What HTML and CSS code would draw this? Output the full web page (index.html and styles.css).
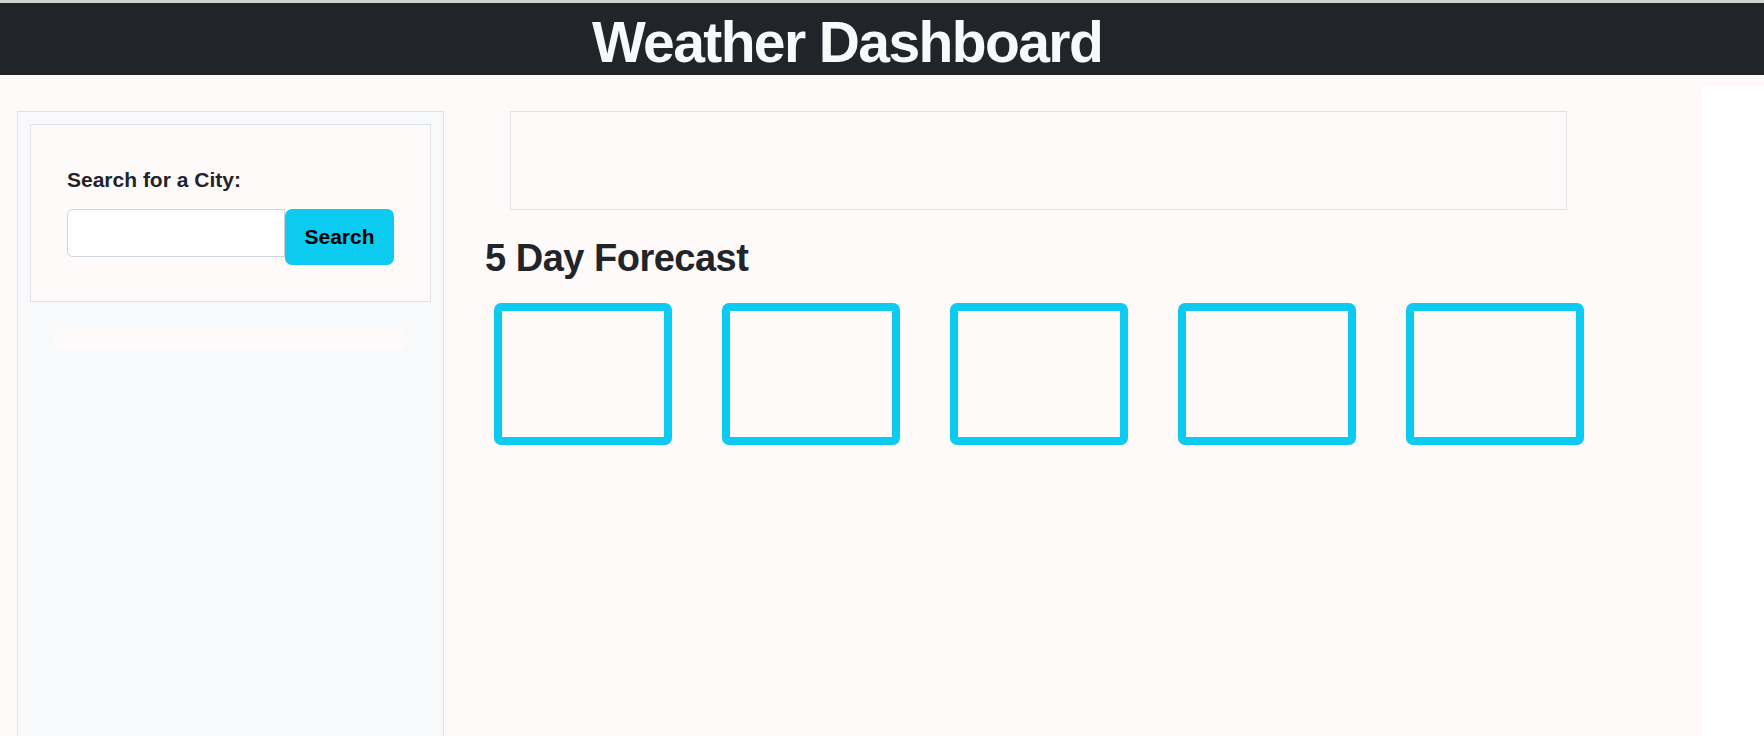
FILE: index.html
```html
<!DOCTYPE html>
<html lang="en">
<head>
<meta charset="utf-8">
<title>Weather Dashboard</title>
<link rel="stylesheet" href="styles.css">
</head>
<body>
<div class="top">
  <div class="topline"></div>
  <header class="navbar">
    <h1 class="title">Weather Dashboard</h1>
  </header>
</div>
<div class="layout">
  <aside class="sidebar">
    <div class="search-card">
      <label class="search-label" for="city">Search for a City:</label>
      <div class="input-group">
        <input id="city" class="city-input" type="text">
        <button class="search-btn" type="button">Search</button>
      </div>
    </div>
    <div class="history-bar"></div>
  </aside>
  <main class="main">
    <div class="current"></div>
    <h2 class="forecast-title">5 Day Forecast</h2>
    <div class="forecast">
      <div class="day"></div>
      <div class="day"></div>
      <div class="day"></div>
      <div class="day"></div>
      <div class="day"></div>
    </div>
  </main>
</div>
</body>
</html>
```

FILE: styles.css
```css
html, body {
  margin: 0;
  padding: 0;
  background: #ffffff;
  font-family: "Liberation Sans", Arial, sans-serif;
  color: #212529;
  overflow: hidden;
}

.top {
  background: #fffafa;
  padding-bottom: 12px;
}

.topline {
  height: 3px;
  background: #d3d3d3;
}

.navbar {
  height: 72px;
  background: #212529;
  padding-right: 70px;
  box-sizing: border-box;
}

.title {
  margin: 0;
  padding-top: 6px;
  line-height: 66px;
  font-size: 57px;
  font-weight: 700;
  letter-spacing: -1.6px;
  color: #f8f9fa;
  text-align: center;
}

.layout {
  width: 1703px;
  min-height: 660px;
  background: #fffafa;
  display: flex;
  align-items: flex-start;
}

.sidebar {
  margin-left: 17px;
  margin-top: 24px;
  width: 427px;
  height: 640px;
  box-sizing: border-box;
  padding: 12px;
  background: #f8f9fa;
  border: 1px solid #dee2e6;
}

.search-card {
  background: #fffafa;
  border: 1px solid #dee2e6;
  padding: 39px 36px 36px;
}

.search-label {
  display: block;
  font-size: 21px;
  font-weight: 700;
  line-height: 32px;
  margin-bottom: 13px;
  color: #212529;
}

.input-group {
  display: flex;
  align-items: flex-start;
}

.city-input {
  width: 218px;
  height: 48px;
  box-sizing: border-box;
  border: 1px solid #ced4da;
  border-radius: 6px 0 0 6px;
  background: #ffffff;
  margin: 0;
  padding: 6px 12px;
  font-size: 20px;
}

.search-btn {
  width: 109px;
  height: 56px;
  margin: 0;
  border: none;
  border-radius: 7px;
  background: #0dcaf0;
  color: #000000;
  font-family: "Liberation Sans", Arial, sans-serif;
  font-size: 21px;
  font-weight: 700;
  padding: 0;
}

.history-bar {
  margin: 26px 24px 0;
  height: 22px;
  border-radius: 8px;
  background: #fffafa;
}

.main {
  flex: 1;
  padding-left: 41px;
  padding-top: 24px;
}

.current {
  margin-left: 25px;
  width: 1057px;
  height: 99px;
  box-sizing: border-box;
  border: 1px solid #dee2e6;
  background: #fffafa;
}

.forecast-title {
  margin: 25px 0 0;
  font-size: 38px;
  line-height: 47px;
  font-weight: 700;
  letter-spacing: -0.5px;
  color: #212529;
}

.forecast {
  display: flex;
  gap: 50px;
  margin-left: 9px;
  margin-top: 21px;
}

.day {
  width: 178px;
  height: 142px;
  box-sizing: border-box;
  border: 8px solid #0dcaf0;
  border-radius: 7px;
  background: #fffafa;
}
```
